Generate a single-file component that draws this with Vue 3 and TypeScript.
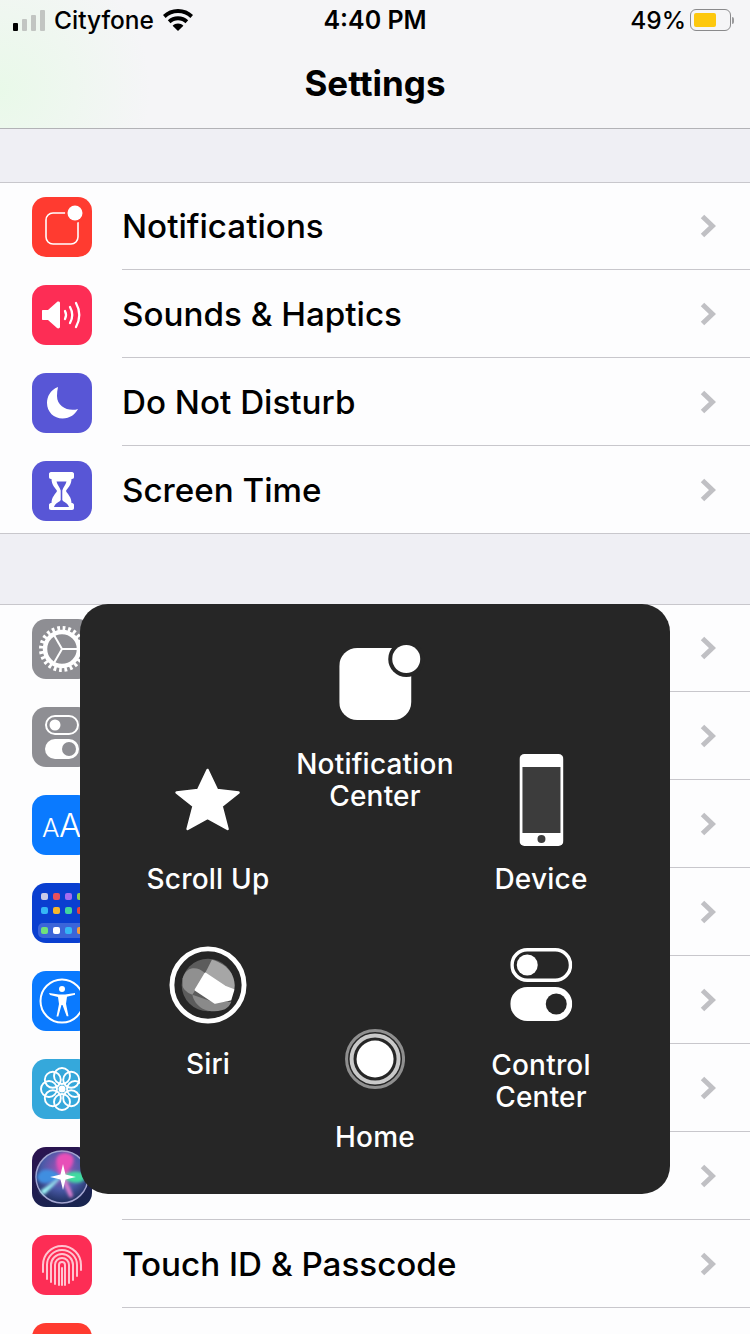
<script setup lang="ts">
interface Row {
  label: string
  icon: string
}

const firstGroup: Row[] = [
  { label: 'Notifications', icon: 'notifications' },
  { label: 'Sounds & Haptics', icon: 'sounds' },
  { label: 'Do Not Disturb', icon: 'moon' },
  { label: 'Screen Time', icon: 'hourglass' },
]

const secondGroup: Row[] = [
  { label: 'General', icon: 'general' },
  { label: 'Control Center', icon: 'toggles' },
  { label: 'Display & Brightness', icon: 'display' },
  { label: 'Home Screen', icon: 'home' },
  { label: 'Accessibility', icon: 'access' },
  { label: 'Wallpaper', icon: 'wallpaper' },
  { label: 'Siri & Search', icon: 'siri' },
  { label: 'Touch ID & Passcode', icon: 'touch' },
  { label: 'Emergency SOS', icon: 'sos' },
]

const groups = [firstGroup, secondGroup]

const homeDots = [
  ['#c9cbe8', '#e8505b', '#a56cf0', '#8fd14f'],
  ['#35b6f5', '#f6b72c', '#3fd6a0', '#e8453c'],
]
const dockDots = ['#6fe07a', '#ffffff', '#35b6f5', '#f59a3c']
const petals = [0, 45, 90, 135, 180, 225, 270, 315]
const spokes = [0, 120, 240]
const fingerArcs = [
  'M11 37v-7a19 19 0 0 1 38 0v5',
  'M15 44V30a15 15 0 0 1 30 0v11',
  'M19 47V30a11 11 0 0 1 22 0v15',
  'M23 49V30a7 7 0 0 1 14 0v18',
  'M27 50V30a3 3 0 0 1 6 0v20',
  'M30 33v17',
]
</script>

<template>
  <div class="screen">
    <header class="nav">
      <div class="status">
        <div class="status-left">
          <div class="signal">
            <i class="bar on b1" />
            <i class="bar b2" />
            <i class="bar b3" />
            <i class="bar b4" />
          </div>
          <span>Cityfone</span>
          <svg class="wifi" viewBox="0 0 30 22" width="30" height="22">
            <path d="M15 0C9 0 4 2.300 0 6l2.600 2.900C6 5.700 10.300 4 15 4s9 1.700 12.400 4.900L30 6C26 2.300 21 0 15 0z" />
            <path d="M15 7.300c-4 0-7.500 1.500-10.200 4l2.700 2.900c2-1.800 4.600-3 7.500-3s5.500 1.200 7.500 3l2.700-2.900c-2.700-2.500-6.200-4-10.200-4z" />
            <path d="M15 14.600c-2.100 0-4 .8-5.400 2.100L15 22l5.400-5.300c-1.400-1.300-3.300-2.100-5.400-2.100z" />
          </svg>
        </div>
        <div class="status-time">4:40 PM</div>
        <div class="status-right">
          <span>49%</span>
          <div class="battery"><i class="battery-fill" /></div>
          <i class="battery-nub" />
        </div>
      </div>
      <h1 class="title">Settings</h1>
    </header>

    <section v-for="(group, g) in groups" :key="g" class="group">
      <div v-for="row in group" :key="row.label" class="row">
        <div class="icon" :class="`icon-${row.icon}`">
          <svg viewBox="0 0 60 60" width="60" height="60">
            <template v-if="row.icon === 'notifications'">
              <rect x="14" y="16" width="32" height="31" rx="7" fill="none" stroke="#fff" stroke-width="1.600" />
              <circle cx="43" cy="16" r="10" fill="#ff3b30" />
              <circle cx="43" cy="16" r="7.500" fill="#fff" />
            </template>
            <template v-else-if="row.icon === 'sounds'">
              <path d="M11 25h5l9-8c1-.8 3-.3 3 1v24c0 1.300-2 1.800-3 1l-9-8h-5c-.6 0-1-.4-1-1v-8c0-.6.4-1 1-1z" fill="#fff" />
              <g fill="none" stroke="#fff" stroke-width="2.300" stroke-linecap="round">
                <path d="M33 26c1.300 2.500 1.300 5.500 0 8" />
                <path d="M38 22c2.800 5 2.800 11 0 16" />
                <path d="M44 18c4.400 8 4.400 16 0 24" />
              </g>
            </template>
            <path
              v-else-if="row.icon === 'moon'"
              d="M26 14C18 17 15 24 15 30c0 9 7 15.500 15.500 15.500C38 45.500 43.500 41 46 36c-9 3-21-2-21-13 0-3 .3-6 1-9z"
              fill="#fff"
            />
            <template v-else-if="row.icon === 'hourglass'">
              <path
                d="M19 11h21c1.300 0 2 1 2 2v3c0 1-.7 2-2 2h-.5c0 6-4 9-5.500 12 1.500 3 5.500 6 5.500 12h.5c1.300 0 2 1 2 2v3c0 1-.7 2-2 2H19c-1.300 0-2-1-2-2v-3c0-1 .7-2 2-2h.5c0-6 4-9 5.500-12-1.500-3-5.500-6-5.500-12H19c-1.300 0-2-1-2-2v-3c0-1 .7-2 2-2z"
                fill="#fff"
              />
              <path
                d="M24.500 20.500h10c-.5 3-3.500 6-4.200 9V39c1 2 5.700 3 6.700 7h-15c1-4 5.700-5 6.700-7v-9.500c-.7-3-3.700-6-4.200-9z"
                fill="#5856d6"
              />
            </template>
            <template v-else-if="row.icon === 'general'">
              <circle cx="30" cy="30" r="17" fill="none" stroke="#fff" stroke-width="4.500" />
              <circle cx="30" cy="30" r="20.500" fill="none" stroke="#fff" stroke-width="5" stroke-dasharray="2.700 2.670" />
              <line
                v-for="a in spokes"
                :key="a"
                x1="30"
                y1="30"
                x2="47"
                y2="30"
                stroke="#fff"
                stroke-width="2"
                :transform="`rotate(${a} 30 30)`"
              />
            </template>
            <template v-else-if="row.icon === 'toggles'">
              <rect x="14" y="9" width="32" height="18" rx="9" fill="none" stroke="#fff" stroke-width="2" />
              <circle cx="23" cy="18" r="5.500" fill="#fff" />
              <rect x="13" y="32" width="34" height="20" rx="10" fill="#fff" />
              <circle cx="37" cy="42" r="7" fill="#8e8e93" />
            </template>
            <template v-else-if="row.icon === 'display'">
              <text x="10" y="42" class="aa-small">A</text>
              <text x="27" y="42" class="aa-big">A</text>
            </template>
            <template v-else-if="row.icon === 'home'">
              <template v-for="(line, r) in homeDots" :key="r">
                <rect
                  v-for="(color, c) in line"
                  :key="c"
                  :x="9 + c * 12"
                  :y="10 + r * 14"
                  width="7"
                  height="7"
                  rx="2"
                  :fill="color"
                />
              </template>
              <rect x="6" y="40" width="48" height="15" rx="5" fill="#fff" opacity=".2" />
              <rect
                v-for="(color, c) in dockDots"
                :key="c"
                :x="9 + c * 12"
                y="44"
                width="7"
                height="7"
                rx="2"
                :fill="color"
              />
            </template>
            <template v-else-if="row.icon === 'access'">
              <circle cx="30" cy="30" r="21.500" fill="none" stroke="#fff" stroke-width="2" />
              <circle cx="30" cy="18" r="3" fill="#fff" />
              <path
                d="M17 22l10 1.500h6l10-1.500v1.800l-8 2-1 7 2.500 12.500h-1.800L30.500 34h-1L26.300 45.500h-1.800l2.500-12.500-1-7-8-2z"
                fill="#fff"
              />
            </template>
            <template v-else-if="row.icon === 'wallpaper'">
              <circle
                v-for="a in petals"
                :key="a"
                cx="30"
                cy="17"
                r="8"
                fill="none"
                stroke="#fff"
                stroke-width="1.900"
                :transform="`rotate(${a} 30 30)`"
              />
              <circle cx="30" cy="30" r="3.500" fill="#fff" />
            </template>
            <template v-else-if="row.icon === 'siri'">
              <defs>
                <radialGradient id="siri-ball" cx=".5" cy=".35" r=".7">
                  <stop offset="0" stop-color="#b04fb8" />
                  <stop offset=".55" stop-color="#4a5aa8" />
                  <stop offset="1" stop-color="#16264f" />
                </radialGradient>
                <filter id="siri-blur" x="-20%" y="-20%" width="140%" height="140%">
                  <feGaussianBlur stdDeviation="1.500" />
                </filter>
              </defs>
              <circle cx="30" cy="30" r="26" fill="url(#siri-ball)" stroke="#a2a4d0" stroke-width="1.500" />
              <g filter="url(#siri-blur)">
                <path d="M30 30C24 20 20 8 32 6c12 0 14 10-2 24z" fill="#e850b8" />
                <path d="M30 30C20 20 8 20 5 30c2 10 15 6 25 0z" fill="#3f8ee0" />
                <path d="M30 30c8-7 18-7 24-2 0 10-16 10-24 2z" fill="#3fdca0" />
                <path d="M32 28L8 44l4 4z" fill="#a0f8f8" />
                <path d="M29 30c3 7 5 14 9 21l3-2c-2-7-5-14-10-20z" fill="#e07fd0" />
              </g>
              <path d="M31 17l2.500 10.500L44 30l-10.500 2.500L31 43l-2.500-10.500L18 30l10.500-2.500z" fill="#fff" />
            </template>
            <g v-else-if="row.icon === 'touch'" fill="none" stroke="#ffc4d0" stroke-width="2" stroke-linecap="round">
              <path v-for="d in fingerArcs" :key="d" :d="d" />
            </g>
          </svg>
        </div>
        <div class="row-body">
          <span class="row-label">{{ row.label }}</span>
          <svg class="chevron" viewBox="0 0 17 26" width="17" height="26">
            <path d="M3.500 3.500l10 9.500-10 9.500" />
          </svg>
        </div>
      </div>
    </section>

    <div class="panel">
      <div class="item item-notify">
        <svg viewBox="0 0 86 82" width="86" height="82">
          <rect x="0" y="10" width="72" height="72" rx="18" fill="#fff" />
          <circle cx="67" cy="21" r="18" fill="#262626" />
          <circle cx="67" cy="21" r="14" fill="#fff" />
        </svg>
        <span class="item-label">Notification<br>Center</span>
      </div>

      <div class="item item-scroll">
        <svg viewBox="0 0 66 64" width="66" height="64">
          <path
            d="M33 2l9.500 20 21.500 2.500-17 13.500 6 23-20-11-20 11 6-23L2 24.500 23.500 22z"
            fill="#fff"
            stroke="#fff"
            stroke-width="2.500"
            stroke-linejoin="round"
          />
        </svg>
        <span class="item-label">Scroll Up</span>
      </div>

      <div class="item item-device">
        <svg viewBox="0 0 44 92" width="44" height="92">
          <rect width="44" height="92" rx="5" fill="#fff" />
          <rect x="3" y="13" width="38" height="66" fill="#3c3c3c" />
          <circle cx="22" cy="85" r="4" fill="#3c3c3c" />
        </svg>
        <span class="item-label">Device</span>
      </div>

      <div class="item item-siri">
        <svg viewBox="0 0 80 80" width="78" height="78">
          <circle cx="40" cy="40" r="37" fill="none" stroke="#fff" stroke-width="5" />
          <circle cx="40" cy="40" r="27" fill="#5c5c5c" />
          <path d="M44 14c8 2 16 7 20 14 3 6 4 11 3 17l-10-3-20-14z" fill="#a6a6a6" />
          <path d="M14 33c2-6 5-9 9-10 5-1 10 1 14 5L27 45l-3 5c-5-2-9-5-10-9z" fill="#909090" />
          <path d="M24 50l23 8 17-1c-2 5-5 8-10 9-7 2-14 1-20-2-5-3-9-8-10-14z" fill="#8a8a8a" />
          <path
            d="M37.300 28.300L57.300 41.700 66 45l-3 10-15.700 3.300L27.300 45z"
            fill="#fff"
            stroke="#fff"
            stroke-width="2"
            stroke-linejoin="round"
          />
        </svg>
        <span class="item-label">Siri</span>
      </div>

      <div class="item item-home">
        <svg viewBox="0 0 60 60" width="60" height="60">
          <circle cx="30" cy="30" r="28.500" fill="none" stroke="#8f8f8f" stroke-width="3" />
          <circle cx="30" cy="30" r="23.500" fill="none" stroke="#c9c9c9" stroke-width="4" />
          <circle cx="30" cy="30" r="18.500" fill="#fff" />
        </svg>
        <span class="item-label">Home</span>
      </div>

      <div class="item item-control">
        <svg viewBox="0 0 62 73" width="62" height="73">
          <rect x="1.750" y="1.750" width="58.500" height="30.500" rx="15.250" fill="none" stroke="#fff" stroke-width="3.500" />
          <circle cx="17" cy="17" r="10.500" fill="#fff" />
          <rect y="39" width="62" height="34" rx="17" fill="#fff" />
          <circle cx="46" cy="56" r="10.500" fill="#262626" />
        </svg>
        <span class="item-label">Control<br>Center</span>
      </div>
    </div>
  </div>
</template>

<style scoped>
.screen {
  position: relative;
  width: 750px;
  height: 1334px;
  overflow: hidden;
  background: #efeff4;
  font-family: Inter, 'Liberation Sans', sans-serif;
  color: #000;
}

.nav {
  height: 128px;
  border-bottom: 1px solid #b2b2b6;
  background: radial-gradient(ellipse 150px 150px at 0 70%, #e9f9e9, rgba(245, 245, 247, 0)), #f5f5f7;
}

.status {
  display: grid;
  grid-template-columns: 1fr auto 1fr;
  align-items: center;
  height: 40px;
  padding: 0 13px;
  font-size: 24.500px;
  font-weight: 500;
}

.status-left {
  display: flex;
  align-items: center;
  gap: 9px;
}

.signal {
  display: flex;
  align-items: flex-end;
  gap: 4px;
  height: 21px;
  margin-top: 1px;
}

.bar {
  width: 5px;
  background: #c2c5c2;
  border-radius: 1px;
}

.bar.on {
  background: #000;
}

.b1 {
  height: 8px;
}

.b2 {
  height: 12px;
}

.b3 {
  height: 16px;
}

.b4 {
  height: 21px;
}

.wifi {
  fill: #000;
}

.status-time {
  font-size: 25px;
  font-weight: 600;
}

.status-right {
  display: flex;
  align-items: center;
  justify-content: flex-end;
  padding-right: 3px;
}

.status-right span {
  margin-right: 4px;
}

.battery {
  width: 41px;
  height: 22px;
  box-sizing: border-box;
  padding: 3px;
  border: 1.500px solid #8a8a8c;
  border-radius: 6px;
}

.battery-fill {
  display: block;
  width: 22px;
  height: 100%;
  background: #fdc80e;
  border-radius: 2px;
}

.battery-nub {
  width: 2px;
  height: 7px;
  margin-left: 1px;
  background: #9a9a9c;
  border-radius: 0 2px 2px 0;
}

.title {
  margin: 0;
  padding-top: 23px;
  font-size: 35px;
  line-height: 40px;
  font-weight: 700;
  text-align: center;
}

.group {
  background: #fdfdfe;
  border-top: 1px solid #c8c7cc;
  border-bottom: 1px solid #c8c7cc;
  margin-top: 53px;
}

.group + .group {
  margin-top: 70px;
}

.row {
  display: flex;
  align-items: center;
  height: 88px;
  padding-left: 32px;
}

.row:last-child {
  margin-bottom: -2px;
}

.icon {
  flex: none;
  width: 60px;
  height: 60px;
  border-radius: 14px;
  overflow: hidden;
}

.icon svg {
  display: block;
}

.icon-notifications,
.icon-sos {
  background: #ff3b30;
}

.icon-sounds,
.icon-touch {
  background: #fd2d55;
}

.icon-moon,
.icon-hourglass {
  background: #5856d6;
}

.icon-general,
.icon-toggles {
  background: #8e8e93;
}

.icon-display,
.icon-access {
  background: #0a7aff;
}

.icon-home {
  background: #0a3fd0;
}

.icon-wallpaper {
  background: #35a8db;
}

.icon-siri {
  background: linear-gradient(160deg, #2c1250, #16264f);
}

.aa-small {
  font-size: 26px;
  font-weight: 300;
  fill: #fff;
}

.aa-big {
  font-size: 33px;
  font-weight: 300;
  fill: #fff;
}

.row-body {
  flex: 1;
  align-self: stretch;
  display: flex;
  align-items: center;
  justify-content: space-between;
  margin-left: 30px;
  margin-bottom: 1px;
  padding-right: 34px;
  border-bottom: 1px solid #c8c7cc;
}

.row:last-child .row-body {
  padding-bottom: 2px;
  border-bottom: none;
}

.row-label {
  font-size: 33.200px;
  font-weight: 500;
}

.chevron {
  fill: none;
  stroke: #c0c0c4;
  stroke-width: 5;
}

.panel {
  position: absolute;
  left: 80px;
  top: 604px;
  width: 590px;
  height: 590px;
  border-radius: 28px;
  background: #262626;
  color: #fff;
}

.item {
  position: absolute;
  display: flex;
  flex-direction: column;
  align-items: center;
  transform: translateX(-50%);
  white-space: nowrap;
}

.item svg {
  display: block;
}

.item-label {
  font-size: 28px;
  line-height: 32px;
  font-weight: 500;
  letter-spacing: 0.2px;
  text-align: center;
}

.item-notify {
  left: 295px;
  top: 34px;
  gap: 28px;
}

.item-notify svg {
  margin-left: 14px;
}

.item-scroll {
  left: 128px;
  top: 164px;
  gap: 31px;
}

.item-device {
  left: 461px;
  top: 150px;
  gap: 17px;
}

.item-siri {
  left: 128px;
  top: 342px;
  gap: 24px;
}

.item-home {
  left: 295px;
  top: 425px;
  gap: 32px;
}

.item-control {
  left: 461px;
  top: 344px;
  gap: 28px;
}
</style>

<style>
html,
body {
  margin: 0;
  background: #efeff4;
}
</style>
